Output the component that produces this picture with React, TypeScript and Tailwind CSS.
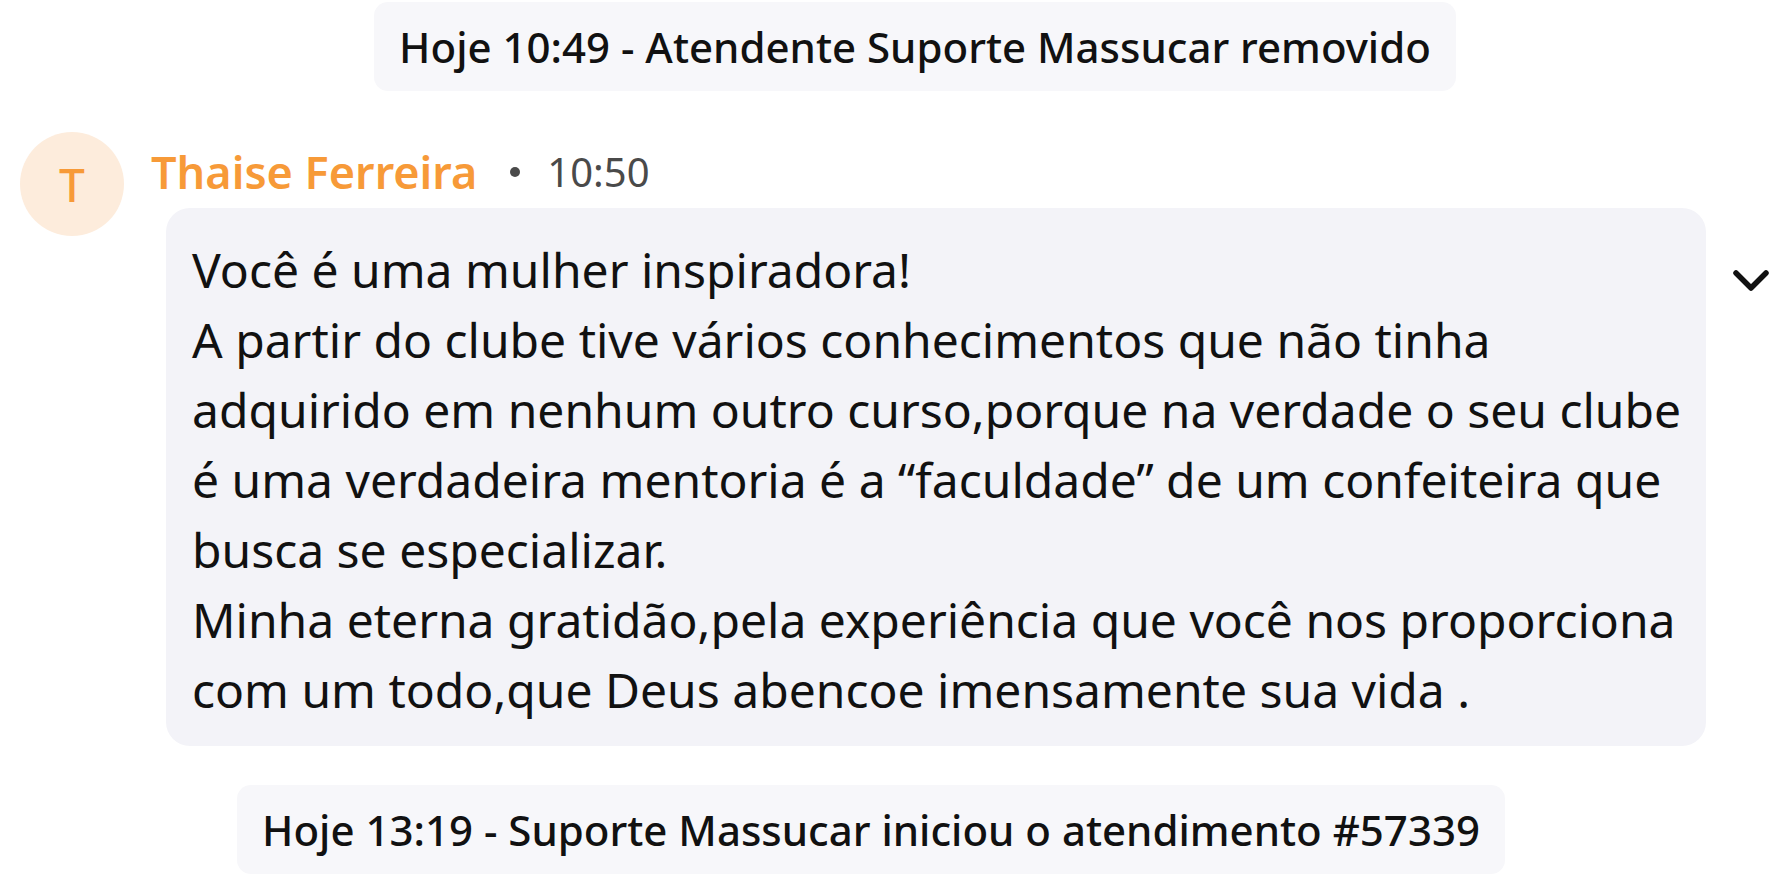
import React from "react";

const messageLines = [
  "Você é uma mulher inspiradora!",
  "A partir do clube tive vários conhecimentos que não tinha",
  "adquirido em nenhum outro curso,porque na verdade o seu clube",
  "é uma verdadeira mentoria é a “faculdade” de um confeiteira que",
  "busca se especializar.",
  "Minha eterna gratidão,pela experiência que você nos proporciona",
  "com um todo,que Deus abencoe imensamente sua vida .",
];

const SystemPill = ({ text, className }: { text: string; className: string }) => (
  <div className={`flex justify-center ${className}`}>
    <div className="rounded-[14px] bg-[#f7f7fa] px-[25px] h-[89px] flex items-center text-[42px] font-medium text-[#111] whitespace-nowrap">
      {text}
    </div>
  </div>
);

export default function App() {
  return (
    <div
      className="w-[1780px] h-[884px] bg-white overflow-hidden pt-[2px]"
      style={{ fontFamily: '"Noto Sans", "Open Sans", sans-serif' }}
    >
      <SystemPill text="Hoje 10:49 - Atendente Suporte Massucar removido" className="pl-[50px]" />

      {/* message */}
      <div className="flex mt-[41px] pl-[20px]">
        <div className="w-[104px] h-[104px] shrink-0 rounded-full bg-[#fdecdc] flex items-center justify-center text-[46px] font-medium text-[#f79a38]">
          T
        </div>
        <div className="flex flex-col ml-[27px]">
          <div className="flex items-center h-[76px] pt-[3px]">
            <span className="text-[45px] font-semibold text-[#f79a38]">Thaise Ferreira</span>
            <span className="w-[10px] h-[10px] rounded-full bg-[#4a4a4a] ml-[33px] mr-[27px]" />
            <span className="text-[40px] text-[#4a4a4a]">10:50</span>
          </div>
          <div className="flex items-start ml-[15px]">
            <div className="w-[1540px] rounded-[24px] bg-[#f3f3f8] pl-[26px] pr-[18px] pt-[27px] pb-[21px] text-[48px] leading-[70px] text-[#111]">
              {messageLines.map((line) => (
                <span key={line} className="block whitespace-nowrap">
                  {line}
                </span>
              ))}
            </div>
            <svg className="ml-[26px] mt-[60px]" width="38" height="26" viewBox="0 0 38 26" fill="none">
              <polyline points="4,5 19,20 34,5" stroke="#111" strokeWidth="5.5" strokeLinecap="round" strokeLinejoin="round" />
            </svg>
          </div>
        </div>
      </div>

      <SystemPill text="Hoje 13:19 - Suporte Massucar iniciou o atendimento #57339" className="mt-[39px] pr-[38px]" />
    </div>
  );
}
